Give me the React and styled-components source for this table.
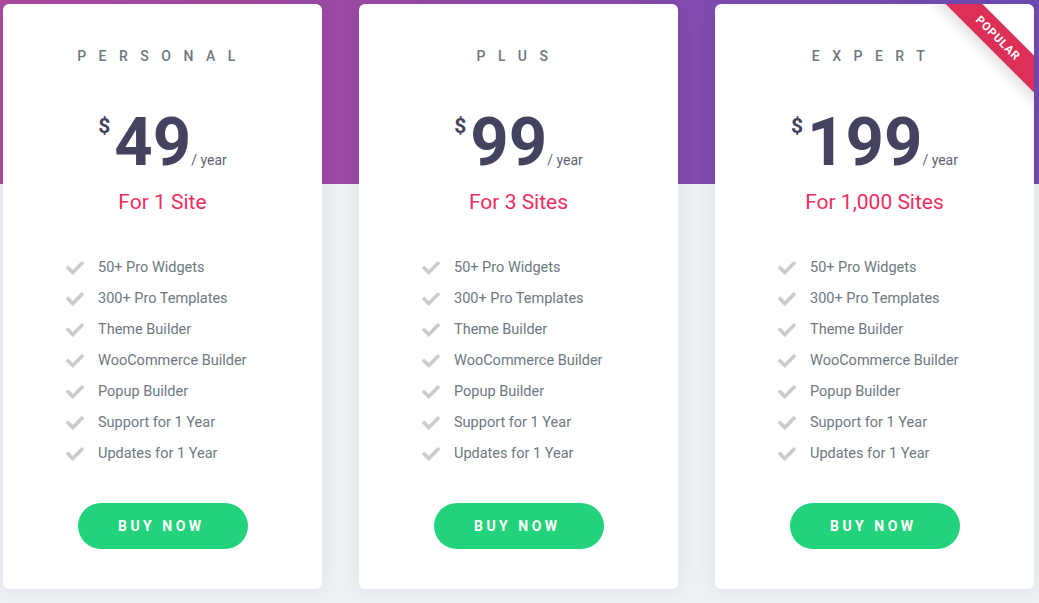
import React from "react";
import styled, { createGlobalStyle } from "styled-components";
import { FaCheck } from "react-icons/fa";

const Global = createGlobalStyle`
  html, body { margin: 0; padding: 0; }
  body {
    font-family: Roboto, "Noto Sans", sans-serif;
    background: #edf0f4;
    -webkit-font-smoothing: antialiased;
  }
`;

const Page = styled.div`
  width: 1039px;
  height: 603px;
  overflow: hidden;
  background:
    linear-gradient(90deg, #ad4a9b 0%, #9a4aa4 35%, #834bad 65%, #6f4ab2 100%) top left / 100% 184px no-repeat,
    #edf0f4;
`;

const Row = styled.div`
  display: flex;
  gap: 37px;
  padding: 4px 0 0 3px;
`;

const Card = styled.div`
  position: relative;
  overflow: hidden;
  width: 319px;
  height: 585px;
  box-sizing: border-box;
  background: #fff;
  border-radius: 6px;
  box-shadow: 0 0 20px rgba(40, 40, 80, 0.08);
  display: flex;
  flex-direction: column;
  align-items: center;
  padding-top: 45px;
`;

const Title = styled.div`
  font-size: 14px;
  line-height: 14px;
  font-weight: 500;
  letter-spacing: 12.5px;
  color: #6d7882;
  text-transform: uppercase;
`;

const Price = styled.div`
  display: flex;
  align-items: baseline;
  margin-top: 46px;
  color: #43435f;
`;

const Currency = styled.span`
  align-self: flex-start;
  font-size: 21px;
  line-height: 20px;
  font-weight: 700;
  margin-top: 7px;
  margin-right: 4px;
`;

const Amount = styled.span`
  font-size: 67px;
  line-height: 66px;
  font-weight: 700;
`;

const Period = styled.span`
  font-size: 14px;
  color: #5d6374;
  margin-left: 0;
`;

const Sites = styled.div`
  margin-top: 15px;
  font-size: 21px;
  line-height: 24px;
  color: #ee2d5f;
`;

const Features = styled.ul`
  list-style: none;
  margin: 38px 0 0;
  padding: 0 0 0 63px;
  align-self: stretch;
`;

const Feature = styled.li`
  display: flex;
  align-items: center;
  height: 31px;
  font-size: 14.5px;
  color: #6d7882;
  svg {
    color: #cbcbcb;
    margin-right: 14px;
    flex: none;
  }
`;

const Button = styled.button`
  margin-top: 34px;
  width: 170px;
  height: 46px;
  border: 0;
  border-radius: 23px;
  background: #23d37b;
  color: #fff;
  font-family: inherit;
  font-size: 14px;
  font-weight: 700;
  letter-spacing: 3.5px;
  padding-left: 3.5px;
  cursor: pointer;
`;

const Ribbon = styled.div`
  position: absolute;
  top: 21px;
  right: -44px;
  width: 160px;
  height: 26px;
  background: #dc3058;
  color: #fff;
  font-size: 11.5px;
  font-weight: 700;
  letter-spacing: 0.8px;
  display: flex;
  align-items: center;
  justify-content: center;
  transform: rotate(45deg);
  box-shadow: 0 6px 14px rgba(0, 0, 0, 0.12);
`;

const features = [
  "50+ Pro Widgets",
  "300+ Pro Templates",
  "Theme Builder",
  "WooCommerce Builder",
  "Popup Builder",
  "Support for 1 Year",
  "Updates for 1 Year",
];

const plans = [
  { name: "Personal", price: "49", sites: "For 1 Site" },
  { name: "Plus", price: "99", sites: "For 3 Sites" },
  { name: "Expert", price: "199", sites: "For 1,000 Sites", popular: true },
];

export default function App() {
  return (
    <Page>
      <Global />
      <Row>
        {plans.map((p) => (
          <Card key={p.name}>
            {p.popular && <Ribbon>POPULAR</Ribbon>}
            <Title>{p.name}</Title>
            <Price>
              <Currency>$</Currency>
              <Amount>{p.price}</Amount>
              <Period>/ year</Period>
            </Price>
            <Sites>{p.sites}</Sites>
            <Features>
              {features.map((f) => (
                <Feature key={f}>
                  <FaCheck size={18} />
                  {f}
                </Feature>
              ))}
            </Features>
            <Button>BUY NOW</Button>
          </Card>
        ))}
      </Row>
    </Page>
  );
}
